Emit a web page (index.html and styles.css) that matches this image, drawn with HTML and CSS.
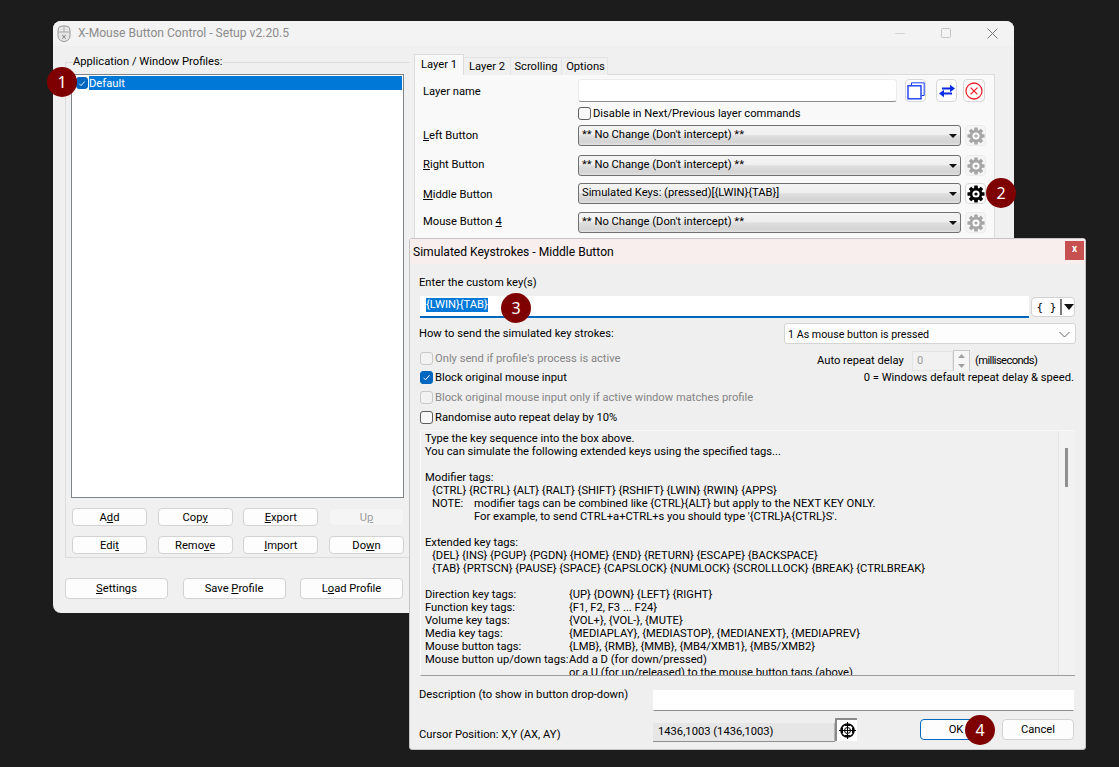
FILE: index.html
```html
<!DOCTYPE html>
<html>
<head>
    <title>X-Mouse Button Control - Setup v2.20.5</title>
    <meta charset="UTF-8">
    <link rel="stylesheet" href="styles.css">
</head>
<body>

<svg class="defs" width="0" height="0">
    <symbol id="gear" viewBox="0 0 20 20">
        <g fill="currentColor">
            <rect x="8" y="0.5" width="4" height="19" rx="0.6"/>
            <rect x="8" y="0.5" width="4" height="19" rx="0.6" transform="rotate(45 10 10)"/>
            <rect x="8" y="0.5" width="4" height="19" rx="0.6" transform="rotate(90 10 10)"/>
            <rect x="8" y="0.5" width="4" height="19" rx="0.6" transform="rotate(135 10 10)"/>
            <circle cx="10" cy="10" r="7"/>
        </g>
        <circle cx="10" cy="10" r="4" fill="#fff"/>
        <circle cx="10" cy="10" r="1.8" fill="currentColor"/>
    </symbol>
</svg>

<!-- main window -->
<div class="window main-window">
    <div class="titlebar">
        <svg class="app-icon" width="14" height="17" viewBox="0 0 14 17">
            <path d="M1 5a4 4 0 0 1 4-4h4a4 4 0 0 1 4 4v6a6 5.500 0 0 1-12 0z" fill="#e6e6e6" stroke="#9a9a9a"/>
            <path d="M1 7h12M7 1v6" stroke="#a8a8a8" fill="none"/>
            <path d="M5.200 10l3.600 3.600M8.800 10l-3.600 3.600" stroke="#777" fill="none"/>
        </svg>
        <span class="title-text">X-Mouse Button Control - Setup v2.20.5</span>
        <div class="caption-buttons">
            <span class="caption-btn"><svg width="11" height="11" viewBox="0 0 11 11"><path d="M0 5.500h10" stroke="#d4d4d4"/></svg></span>
            <span class="caption-btn"><svg width="11" height="11" viewBox="0 0 11 11"><rect x="0.5" y="0.5" width="9" height="9" rx="1" fill="none" stroke="#c4c4c4"/></svg></span>
            <span class="caption-btn"><svg width="11" height="11" viewBox="0 0 11 11"><path d="M0.5 0.5l10 10M10.500 0.5l-10 10" stroke="#777"/></svg></span>
        </div>
    </div>

    <div class="main-body">
        <div class="left-col">
            <fieldset class="profiles">
                <legend>Application / Window Profiles:</legend>
                <div class="listbox">
                    <div class="list-row">
                        <span class="check checked"><svg width="11" height="11" viewBox="0 0 11 11"><path d="M2.500 5.800l2 2 4-4.600" fill="none" stroke="#fff"/></svg></span>
                        <span class="list-label">Default</span>
                    </div>
                </div>
                <div class="profile-buttons">
                    <button class="btn">A<u>d</u>d</button>
                    <button class="btn">Cop<u>y</u></button>
                    <button class="btn"><u>E</u>xport</button>
                    <button class="btn disabled">U<u>p</u></button>
                    <button class="btn">Edi<u>t</u></button>
                    <button class="btn">Remo<u>v</u>e</button>
                    <button class="btn"><u>I</u>mport</button>
                    <button class="btn">Do<u>w</u>n</button>
                </div>
            </fieldset>
            <div class="bottom-buttons">
                <button class="btn wide"><u>S</u>ettings</button>
                <button class="btn wide">Save <u>P</u>rofile</button>
                <button class="btn wide">L<u>o</u>ad Profile</button>
            </div>
        </div>

        <div class="right-col">
            <div class="tabs">
                <span class="tab active">Layer 1</span>
                <span class="tab">Layer 2</span>
                <span class="tab">Scrolling</span>
                <span class="tab">Options</span>
            </div>
            <div class="tab-panel">
                <div class="layer-grid">
                    <span class="layer-label name-label">Layer name</span>
                    <div class="layer-control">
                        <div class="text-input layer-input"></div>
                        <span class="icon-btn copy-btn">
                            <svg width="18" height="18" viewBox="0 0 18 18"><path d="M4.500 3.500V.8h12.700v12.700h-2.700" fill="none" stroke="#1a3cf0"/><rect x="1" y="3.800" width="13" height="13" fill="none" stroke="#1a3cf0" stroke-width="1.400"/></svg>
                        </span>
                        <span class="icon-btn swap-btn">
                            <svg width="18" height="14" viewBox="0 0 18 14"><path d="M4 4.500h9" stroke="#0a2be8" stroke-width="2"/><path d="M12 .8l5 3.700-5 3.700z" fill="#0a2be8"/><path d="M14 9.500H5" stroke="#0a2be8" stroke-width="2"/><path d="M6 5.800L1 9.500l5 3.700z" fill="#0a2be8"/></svg>
                        </span>
                        <span class="icon-btn clear-btn">
                            <svg width="18" height="18" viewBox="0 0 18 18"><circle cx="9" cy="9" r="8" fill="none" stroke="#f0222a" stroke-width="1.300"/><path d="M5.600 5.600l6.800 6.800M12.400 5.600l-6.800 6.800" stroke="#f0222a" stroke-width="1.300"/></svg>
                        </span>
                    </div>

                    <span></span>
                    <label class="check-row"><span class="check"></span>Disable in Next/Previous layer commands</label>

                    <span class="layer-label left-label"><u>L</u>eft Button</span>
                    <div class="layer-control">
                        <div class="combo"><span>** No Change (Don't intercept) **</span><i class="combo-arrow"></i></div>
                        <span class="gear-btn off"><svg width="18" height="18"><use href="#gear"/></svg></span>
                    </div>

                    <span class="layer-label"><u>R</u>ight Button</span>
                    <div class="layer-control">
                        <div class="combo"><span>** No Change (Don't intercept) **</span><i class="combo-arrow"></i></div>
                        <span class="gear-btn off"><svg width="18" height="18"><use href="#gear"/></svg></span>
                    </div>

                    <span class="layer-label middle-label"><u>M</u>iddle Button</span>
                    <div class="layer-control">
                        <div class="combo"><span>Simulated Keys: (pressed)[{LWIN}{TAB}]</span><i class="combo-arrow"></i></div>
                        <span class="gear-btn"><svg width="18" height="18"><use href="#gear"/></svg></span>
                    </div>

                    <span class="layer-label">Mouse Button <u>4</u></span>
                    <div class="layer-control">
                        <div class="combo"><span>** No Change (Don't intercept) **</span><i class="combo-arrow"></i></div>
                        <span class="gear-btn off"><svg width="18" height="18"><use href="#gear"/></svg></span>
                    </div>
                </div>
            </div>
        </div>
    </div>
</div>

<!-- simulated keystrokes dialog -->
<div class="window dialog">
    <div class="dialog-title">
        <span class="dialog-title-text">Simulated Keystrokes - Middle Button</span>
        <span class="dialog-close">x</span>
    </div>
    <div class="dialog-body">
        <div class="field-label">Enter the custom key(s)</div>
        <div class="keys-row">
            <div class="keys-input"><span class="selected-text">{LWIN}{TAB}</span></div>
            <div class="braces-btn"><span class="braces">{ }</span><i class="braces-split"></i><i class="braces-arrow"></i></div>
        </div>
        <div class="how-row">
            <span>How to send the simulated key strokes:</span>
            <div class="select">
                <span>1 As mouse button is pressed</span>
                <svg width="11" height="7" viewBox="0 0 11 7"><path d="M.5 1l5 5 5-5" fill="none" stroke="#666"/></svg>
            </div>
        </div>
        <div class="options">
            <div class="options-left">
                <label class="check-row muted"><span class="check off"></span>Only send if profile's process is active</label>
                <label class="check-row"><span class="check checked"><svg width="11" height="11" viewBox="0 0 11 11"><path d="M2.500 5.800l2 2 4-4.600" fill="none" stroke="#fff"/></svg></span>Block original mouse input</label>
                <label class="check-row muted"><span class="check off"></span>Block original mouse input only if active window matches profile</label>
                <label class="check-row"><span class="check"></span>Randomise auto repeat delay by 10%</label>
            </div>
            <div class="options-right">
                <div class="repeat-row">
                    <span class="repeat-label">Auto repeat delay</span>
                    <div class="spin-input">0</div>
                    <div class="spin-arrows">
                        <span><svg width="7" height="4" viewBox="0 0 7 4"><path d="M3.500 0l3.500 4H0z" fill="#a0a0a0"/></svg></span>
                        <span><svg width="7" height="4" viewBox="0 0 7 4"><path d="M3.500 4L0 0h7z" fill="#a0a0a0"/></svg></span>
                    </div>
                    <span class="repeat-unit">(milliseconds)</span>
                </div>
                <div class="repeat-note">0 = Windows default repeat delay &amp; speed.</div>
            </div>
        </div>

        <div class="help-box">
            <div class="help-text">
                <p>Type the key sequence into the box above.<br>You can simulate the following extended keys using the specified tags...</p>
                <p class="lead">Modifier tags:</p>
                <p class="indent">{CTRL} {RCTRL} {ALT} {RALT} {SHIFT} {RSHIFT} {LWIN} {RWIN} {APPS}</p>
                <div class="note">
                    <span>NOTE:</span>
                    <span>modifier tags can be combined like {CTRL}{ALT} but apply to the NEXT KEY ONLY.<br>For example, to send CTRL+a+CTRL+s you should type '{CTRL}A{CTRL}S'.</span>
                </div>
                <p class="lead">Extended key tags:</p>
                <p class="indent spaced">{DEL} {INS} {PGUP} {PGDN} {HOME} {END} {RETURN} {ESCAPE} {BACKSPACE}<br>{TAB} {PRTSCN} {PAUSE} {SPACE} {CAPSLOCK} {NUMLOCK} {SCROLLLOCK} {BREAK} {CTRLBREAK}</p>
                <div class="tag-table">
                    <span>Direction key tags:</span><span>{UP} {DOWN} {LEFT} {RIGHT}</span>
                    <span>Function key tags:</span><span>{F1, F2, F3 ... F24}</span>
                    <span>Volume key tags:</span><span>{VOL+}, {VOL-}, {MUTE}</span>
                    <span>Media key tags:</span><span>{MEDIAPLAY}, {MEDIASTOP}, {MEDIANEXT}, {MEDIAPREV}</span>
                    <span>Mouse button tags:</span><span>{LMB}, {RMB}, {MMB}, {MB4/XMB1}, {MB5/XMB2}</span>
                    <span>Mouse button up/down tags:</span><span>Add a D (for down/pressed)</span>
                    <span></span><span>or a U (for up/released) to the mouse button tags (above)</span>
                </div>
            </div>
            <div class="help-scroll"><i class="help-thumb"></i></div>
        </div>

        <div class="desc-row">
            <span>Description (to show in button drop-down)</span>
            <div class="text-input desc-input"></div>
        </div>
        <div class="cursor-row">
            <span class="cursor-label">Cursor Position: X,Y (AX, AY)</span>
            <div class="cursor-value">1436,1003 (1436,1003)</div>
            <span class="crosshair">
                <svg width="17" height="17" viewBox="0 0 17 17"><circle cx="8.500" cy="8.500" r="6.500" fill="none" stroke="#000" stroke-width="1.500"/><circle cx="8.500" cy="8.500" r="3" fill="none" stroke="#000"/><path d="M8.500 0v17M0 8.500h17M6 3.500h5M6 13.500h5M3.500 6v5M13.500 6v5" stroke="#000"/></svg>
            </span>
            <div class="dialog-actions">
                <button class="btn action default">OK</button>
                <button class="btn action">Cancel</button>
            </div>
        </div>
    </div>
</div>

<span class="badge badge-1">1</span>
<span class="badge badge-2">2</span>
<span class="badge badge-3">3</span>
<span class="badge badge-4">4</span>

</body>
</html>
```

FILE: styles.css
```css
* {
    box-sizing: border-box;
}
html, body {
    height: 100%;
}
body {
    position: relative;
    margin: 0;
    overflow: hidden;
    background: #1c1c1c;
    color: #000;
    font-family: Roboto, "Noto Sans", sans-serif;
    font-size: 11.2px;
    line-height: 13px;
}
u {
    text-underline-offset: 1px;
}
.defs {
    position: absolute;
}
.window {
    position: absolute;
    background: #f0f0f0;
}

/* main window */
.main-window {
    left: 53px;
    top: 21px;
    width: 961px;
    height: 592px;
    border-radius: 8px;
    overflow: hidden;
}
.titlebar {
    display: flex;
    align-items: center;
    height: 25px;
    padding-left: 4px;
    background: #f3f3f3;
    color: #8b8b8b;
    font-size: 12.1px;
}
.app-icon {
    margin-right: 7px;
}
.caption-buttons {
    display: flex;
    margin-left: auto;
    margin-right: -1px;
}
.caption-btn {
    display: flex;
    justify-content: center;
    width: 46px;
}
.main-body {
    display: flex;
    padding: 8px 0 0 12px;
}
.left-col {
    width: 344px;
    flex: none;
}
.profiles {
    width: 344px;
    height: 504px;
    margin: 0;
    padding: 4px 5px 0 5px;
    border: 1px solid #dcdcdc;
    border-right-color: #f0f0f0;
}
.profiles legend {
    margin-left: 2px;
    padding: 0;
    height: 16px;
    line-height: 16px;
}
.listbox {
    width: 333px;
    height: 424px;
    padding: 1px;
    background: #fff;
    border: 1px solid #7f8489;
}
.list-row {
    display: flex;
    align-items: center;
    height: 14px;
}
.list-row .check {
    margin: 0 1px 0 3px;
    width: 12px;
    height: 12px;
}
.list-label {
    flex: 1;
    height: 14px;
    padding-top: 1px;
    background: #0078d7;
    color: #fff;
}
.profile-buttons {
    display: grid;
    grid-template-columns: repeat(4, 75px);
    justify-content: space-between;
    row-gap: 10px;
    width: 332px;
    margin: 10px 0 0 1px;
}
.btn {
    height: 18px;
    padding: 1px 0 0;
    background: #fdfdfd;
    border: 1px solid #d2d2d2;
    border-radius: 4px;
    color: #000;
    font: inherit;
    line-height: 14px;
}
.btn.disabled {
    background: #f5f5f5;
    border-color: #eeeeee;
    color: #9c9c9c;
}
.bottom-buttons {
    display: flex;
    justify-content: space-between;
    width: 338px;
    margin-top: 20px;
}
.btn.wide {
    width: 103px;
    height: 21px;
}

/* layer tabs */
.right-col {
    width: 581px;
    margin-left: 5px;
}
.tabs {
    position: relative;
    z-index: 1;
    display: flex;
    align-items: flex-end;
    height: 21px;
    white-space: nowrap;
}
.tab {
    display: flex;
    justify-content: center;
    align-items: center;
    height: 18px;
    background: #f0f0f0;
    border: 1px solid #e4e4e4;
    border-left: 0;
    border-bottom: 0;
}
.tab:nth-child(2) { width: 47px; }
.tab:nth-child(3) { width: 51px; }
.tab:nth-child(4) { width: 46px; padding-left: 2px; }
.tab.active {
    width: 50px;
    height: 21px;
    padding-bottom: 1px;
    background: #f9f9f9;
    border: 1px solid #dcdcdc;
    border-bottom: 0;
}
.tab-panel {
    height: 500px;
    margin-top: -1px;
    padding: 4px 0 0 8px;
    background: #f9f9f9;
    border: 1px solid #dcdcdc;
}
.layer-grid {
    display: grid;
    grid-template-columns: 155px 1fr;
    grid-template-rows: 27px 19px 30px 28px 29px 29px;
}
.layer-label {
    padding-top: 3px;
}
.name-label {
    padding-top: 6px;
}
.left-label {
    padding-top: 4px;
}
.middle-label {
    padding-top: 5px;
}
.layer-control {
    display: flex;
    align-items: flex-start;
}
.text-input {
    background: #fff;
    border: 1px solid #ececec;
    border-bottom-color: #8c8c8c;
    border-radius: 3px;
}
.layer-input {
    width: 319px;
    height: 23px;
}
.icon-btn {
    display: flex;
    justify-content: center;
    align-items: center;
    height: 23px;
    background: #fdfdfd;
    border: 1px solid #d8d8d8;
    border-radius: 4px;
}
.copy-btn {
    width: 21px;
    margin-left: 8px;
}
.swap-btn {
    width: 21px;
    margin-left: 10px;
}
.clear-btn {
    width: 22px;
    margin-left: 6px;
}
.check-row {
    display: flex;
    align-items: center;
    height: 14px;
    white-space: nowrap;
}
.check {
    display: flex;
    justify-content: center;
    align-items: center;
    flex: none;
    width: 13px;
    height: 13px;
    margin-right: 2px;
    background: #f8f8f8;
    border: 1px solid #5e5e5e;
    border-radius: 3px;
}
.check.checked {
    background: #0067c0;
    border-color: #0067c0;
}
.check.off {
    background: #f2f2f2;
    border-color: #c8c8c8;
}
.muted {
    color: #858585;
}
.combo {
    display: flex;
    align-items: center;
    justify-content: space-between;
    width: 383px;
    height: 21px;
    padding: 0 3px 2px 3px;
    background: linear-gradient(#f4f4f4 0, #efefef 45%, #dedede 52%, #d4d4d4 85%, #e2e2e2 100%);
    border: 1px solid #707070;
    border-radius: 3px;
}
.combo-arrow {
    width: 0;
    height: 0;
    margin-top: 3px;
    border: 4px solid transparent;
    border-top: 4px solid #111;
    border-bottom: 0;
}
.gear-btn {
    display: flex;
    justify-content: center;
    align-items: center;
    width: 21px;
    height: 21px;
    margin-left: 4px;
    background: #fdfdfd;
    border: 1px solid #d8d8d8;
    border-radius: 4px;
    color: #000;
}
.gear-btn.off {
    background: #f5f5f5;
    border-color: #ececec;
    color: #a6a6a6;
}

/* dialog */
.dialog {
    left: 409px;
    top: 238px;
    width: 677px;
    height: 512px;
    border: 1px solid #c4c4c4;
    border-radius: 3px;
    background: #efefef;
}
.dialog-title {
    display: flex;
    align-items: center;
    justify-content: space-between;
    height: 25px;
    padding: 0 1px 0 3px;
    background: #f9eeee;
    font-size: 12.1px;
}
.dialog-title-text {
    margin-top: 2px;
}
.dialog-close {
    display: flex;
    justify-content: center;
    width: 19px;
    height: 19px;
    margin-bottom: 3px;
    background: #c75050;
    color: #fff;
    font-weight: bold;
    font-size: 10px;
    line-height: 16px;
}
.dialog-body {
    padding: 12px 10px 0 10px;
}
.field-label {
    height: 14px;
    margin-left: -1px;
}
.keys-row {
    display: flex;
    margin-top: 6px;
}
.keys-input {
    width: 609px;
    height: 22px;
    padding: 2px 0 0 6px;
    background: #fff;
    border-bottom: 2px solid #0067c0;
}
.selected-text {
    display: inline-block;
    height: 14px;
    background: #0078d7;
    color: #fff;
}
.braces-btn {
    display: flex;
    align-items: center;
    width: 44px;
    height: 20px;
    margin: 1px 0 0 2px;
    background: #fdfdfd;
    border: 1px solid #d2d2d2;
    border-radius: 4px;
}
.braces {
    width: 29px;
    padding-left: 1px;
    text-align: center;
    font-family: "DejaVu Sans Mono", monospace;
    font-size: 11px;
}
.braces-split {
    width: 2px;
    height: 16px;
    background: #777;
}
.braces-arrow {
    width: 0;
    height: 0;
    margin-left: 2px;
    border: 5px solid transparent;
    border-top: 6px solid #111;
    border-bottom: 0;
}
.how-row {
    display: flex;
    align-items: center;
    justify-content: space-between;
    height: 21px;
    margin-top: 5px;
    margin-left: -1px;
}
.select {
    display: flex;
    align-items: center;
    justify-content: space-between;
    width: 292px;
    height: 21px;
    padding: 1px 5px 0 3px;
    background: #fdfdfd;
    border: 1px solid #d4d4d4;
    border-radius: 3px;
    margin-right: -1px;
    font-size: 10.7px;
}
.options {
    display: flex;
    justify-content: space-between;
    margin-top: 7px;
}
.options-left {
    display: grid;
    grid-auto-rows: 19.8px;
    align-items: start;
}
.options-right {
    width: 258px;
    margin-top: -1px;
}
.repeat-row {
    display: flex;
    align-items: center;
    height: 20px;
    padding-top: 1px;
}
.repeat-label {
    width: 87px;
    white-space: nowrap;
}
.repeat-unit {
    letter-spacing: -0.6px;
}
.spin-input {
    width: 41px;
    height: 20px;
    margin-left: 8px;
    padding: 2px 0 0 4px;
    color: #9a9a9a;
    background: #f1f1f1;
    border: 1px solid #e4e4e4;
}
.spin-arrows {
    display: grid;
    grid-auto-rows: 10px;
    width: 17px;
    height: 21px;
    margin-right: 5px;
    border: 1px solid #c8c8c8;
}
.spin-arrows span {
    display: flex;
    justify-content: center;
    align-items: center;
    background: #f6f6f6;
}
.repeat-note {
    margin-top: 1px;
    padding-right: 1px;
    text-align: right;
}
.help-box {
    display: flex;
    height: 246px;
    margin-top: 0;
    overflow: hidden;
    background: #f0f0f0;
    border-top: 1px solid #f8f8f8;
    border-left: 1px solid #f8f8f8;
    border-bottom: 1px solid #9a9a9a;
}
.help-text {
    flex: 1;
    padding: 1px 0 0 4px;
    white-space: nowrap;
}
.help-text p {
    margin: 0 0 13px;
}
.help-text .lead {
    margin-bottom: 0;
}
.help-text .indent {
    margin-bottom: 0;
    padding-left: 7px;
}
.help-text .indent.spaced {
    margin-bottom: 13px;
}
.note {
    display: flex;
    margin-bottom: 13px;
    padding-left: 7px;
}
.note span:first-child {
    width: 42px;
    flex: none;
}
.tag-table {
    display: grid;
    grid-template-columns: 144px 1fr;
    grid-auto-rows: 13px;
}
.help-scroll {
    width: 17px;
    padding: 17px 0 0 6px;
    background: #f2f2f2;
    border-left: 1px solid #e6e6e6;
}
.help-thumb {
    display: block;
    width: 3px;
    height: 39px;
    background: #8f8f8f;
}
.desc-row {
    display: flex;
    justify-content: space-between;
    height: 21px;
    margin-top: 14px;
    padding-right: 1px;
}
.desc-row span {
    margin: -2px 0 0 -1px;
}
.text-input.desc-input {
    width: 421px;
    height: 21px;
    border-radius: 0;
    border-color: #ffffff;
    border-bottom-color: #8c8c8c;
}
.cursor-row {
    display: flex;
    align-items: flex-start;
    margin-top: 7px;
}
.cursor-label {
    width: 234px;
    margin-left: -1px;
    padding-top: 10px;
}
.cursor-value {
    width: 182px;
    height: 19px;
    margin-top: 5px;
    padding: 2px 0 0 5px;
    background: #e6e6e6;
    border-bottom: 1px solid #8f8f8f;
    border-right: 1px solid #b5b5b5;
}
.crosshair {
    display: flex;
    justify-content: center;
    align-items: center;
    width: 22px;
    height: 23px;
    background: #fff;
    border-top: 2px solid #8a8a8a;
    border-left: 2px solid #8a8a8a;
}
.dialog-actions {
    display: flex;
    gap: 10px;
    margin: 1px 1px 0 auto;
}
.btn.action {
    width: 72px;
    height: 21px;
    padding-top: 0;
}
.btn.default {
    border-color: #0067c0;
}

/* step markers */
.badge {
    position: absolute;
    display: flex;
    justify-content: center;
    align-items: center;
    width: 30px;
    height: 30px;
    background: #7f0000;
    border-radius: 50%;
    color: #fff;
    font-family: "Noto Sans", sans-serif;
    font-size: 16px;
}
.badge-1 { left: 47px; top: 67px; }
.badge-2 { left: 986px; top: 178px; }
.badge-3 { left: 501px; top: 293px; }
.badge-4 { left: 965px; top: 715px; }
```
